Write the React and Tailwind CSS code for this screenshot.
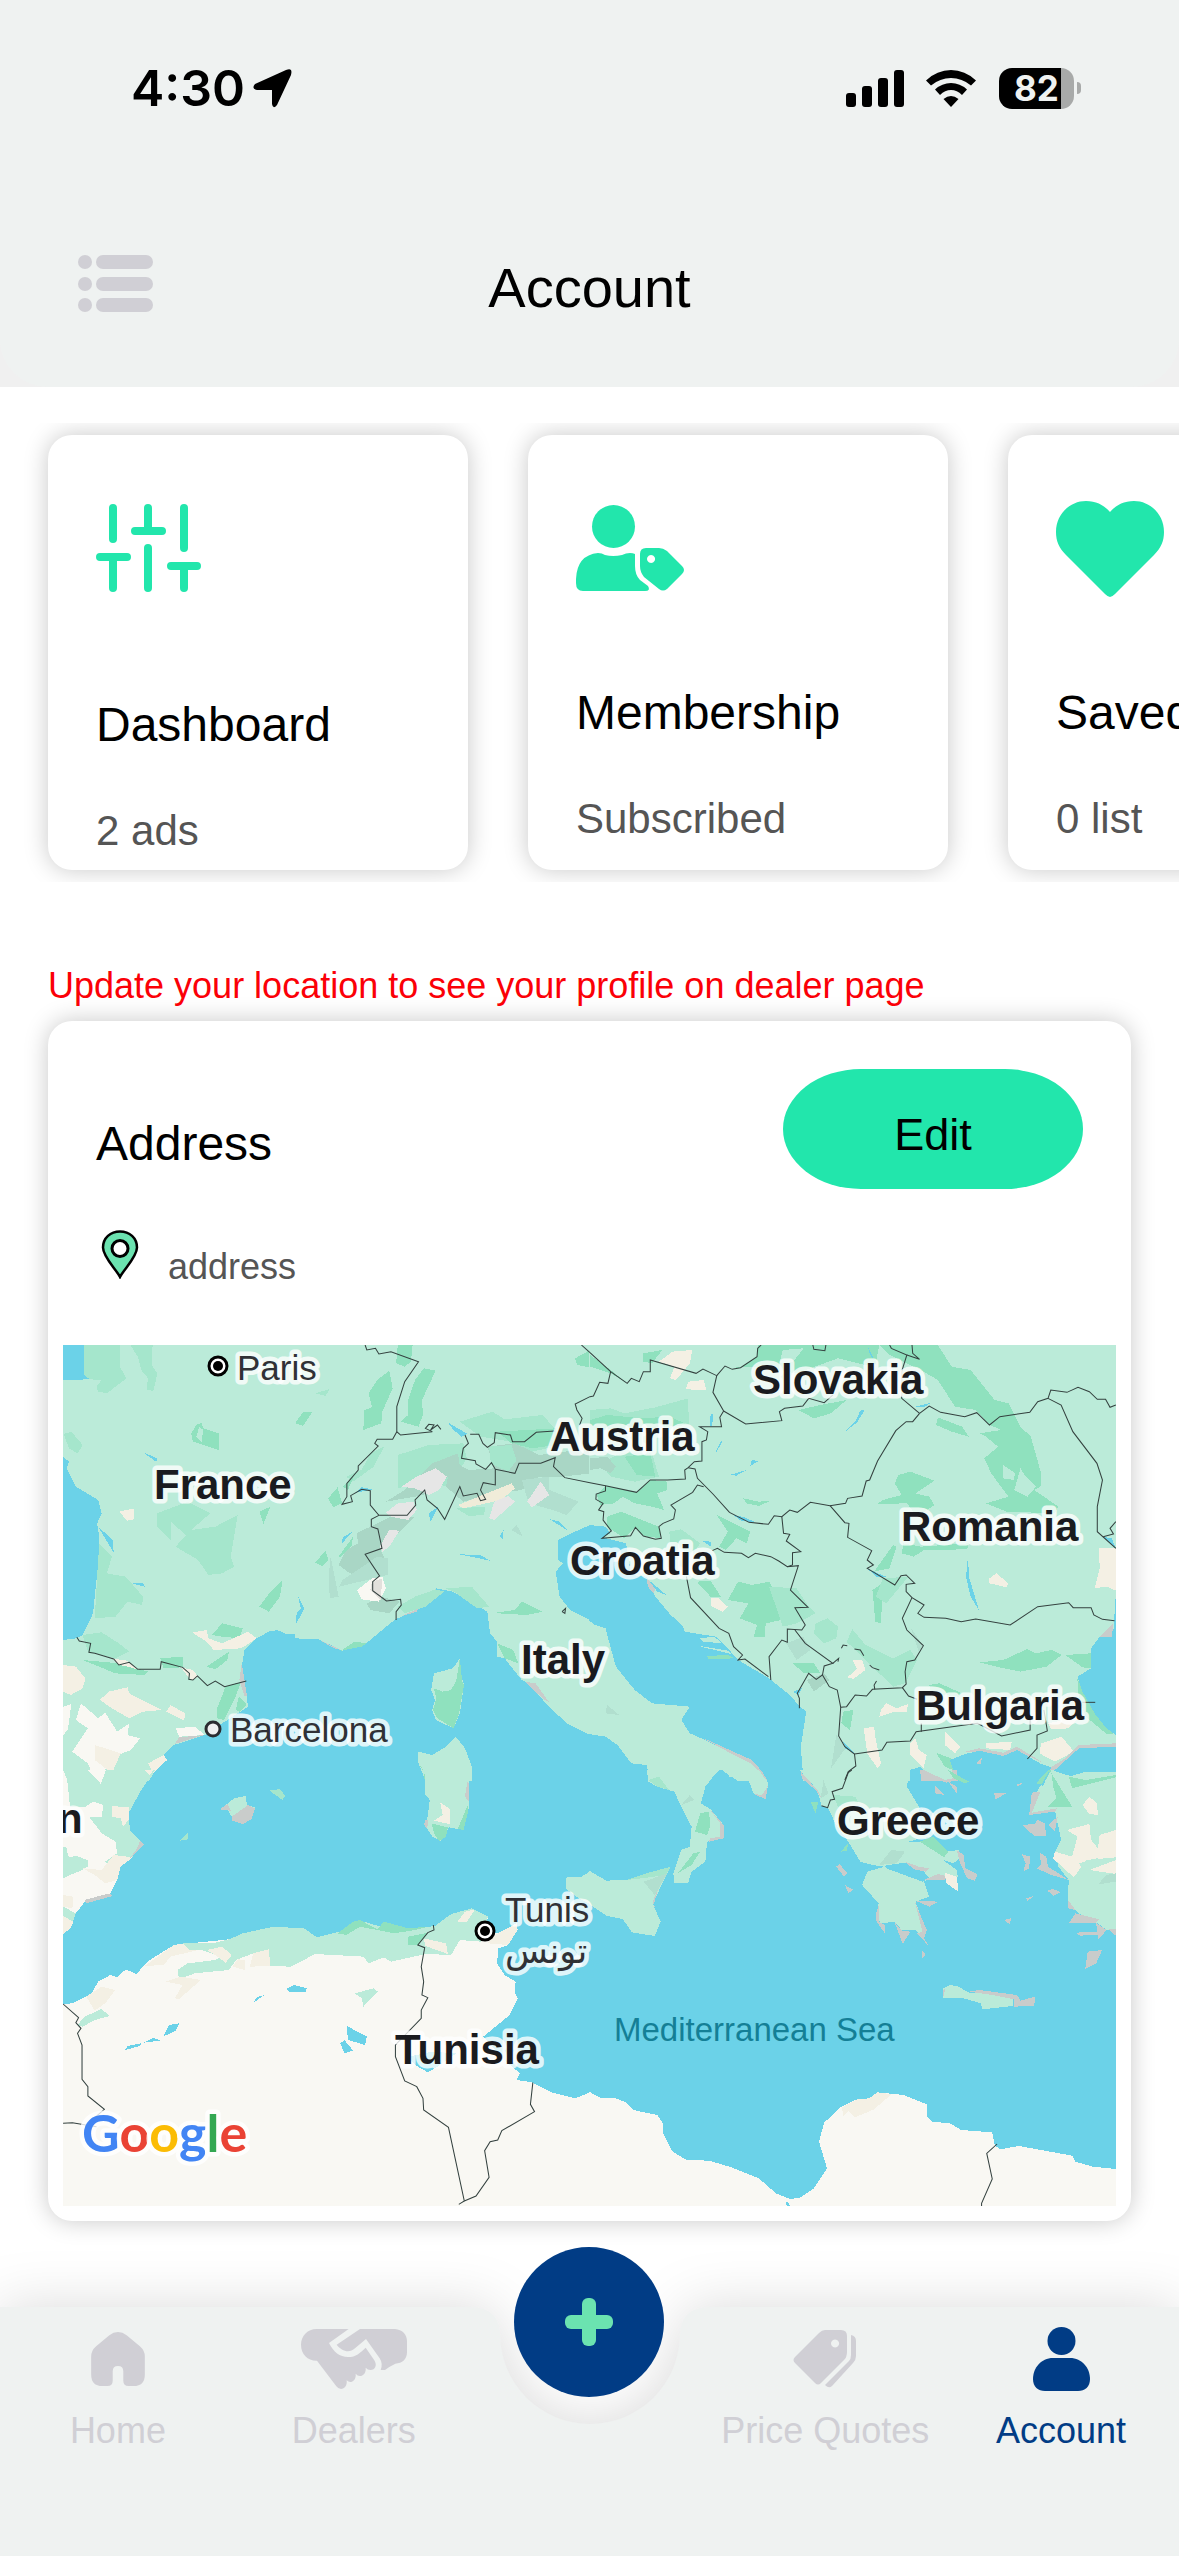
import React from "react";

const SANS = '"Liberation Sans", "Noto Sans", sans-serif';

const DARK = "#8fe1be";
const MID = "#a5e6cc";
const LAND = "#bbebd9";
const BEIGE = "#f4f0e4";
const CREAM = "#f9f8f3";
const GREY = "#c9cccb";
const SEA = "#6bd2e8";
const RIDGE = "#a9d6c5";
const SNOW = "#e6e6e6";

/* Each sheet of the map has its own origin; shapes are [colour, points...]. */
const sheets = [
  {
    id: "north-west",
    x: 50,
    y: 1330,
    shapes: [
      [LAND, "98,45 1568,45 1568,585 1535,600 1475,630 1475,690 1490,700 1468,725 1480,800 1510,840 1572,872 1572,1217 1500,1180 1440,1120 1390,1060 1370,1050 1320,985 1298,980 1298,935 1278,910 1270,845 1170,785 1120,775 1070,835 1000,870 912,945 850,962 780,928 712,925 712,912 685,912 660,900 635,905 600,925 565,960 557,1010 565,1060 575,1130 500,1180 450,1215 360,1245 330,1275 340,1290 300,1330 288,1352 38,1352 38,930 75,925 95,915 125,850 130,800 140,700 143,620 137,580 150,550 140,510 75,470 48,415 55,395 38,380 38,150 115,148 100,135"],
      [LAND, "1115,1030 1170,1015 1190,985 1195,1040 1202,1065 1190,1150 1172,1195 1120,1170 1110,1140 1118,1110 1107,1080"],
      [DARK, "1190,985 1197,1055 1202,1065 1188,1150 1172,1195 1125,1165 1112,1140 1122,1105 1115,1075 1140,1085 1165,1080 1180,1050"],
      [LAND, "1070,1265 1110,1275 1150,1250 1178,1220 1205,1255 1225,1310 1225,1352 1090,1352 1070,1300"],
      [DARK, "1070,1300 1080,1312 1095,1352 1088,1352 1085,1325"],
      [MID, "98,45 203,45 203,110 222,145 165,190 140,185 135,170 150,150 115,148 100,135"],
      [MID, "233,45 298,45 295,105 312,130 300,183 280,178 285,145 265,120 255,80"],
      [MID, "40,312 62,305 95,345 80,370 55,355"],
      [DARK, "410,310 425,285 440,278 445,295 490,310 490,360 430,340 415,335"],
      [LAND, "433,290 425,320 440,335 445,300"],
      [DARK, "735,245 762,245 735,288 712,280"],
      [MID, "770,190 812,177 800,198"],
      [DARK, "1010,45 1053,45 1048,95 1030,110 1005,100"],
      [DARK, "985,120 995,175 965,245 962,280 910,300 912,240 935,232 925,190 950,150 975,130"],
      [DARK, "1085,115 1120,122 1080,210 1083,255 1070,290 1018,275 1040,255 1038,215 1060,150"],
      [DARK, "1568,60 1525,85 1530,105 1568,112"],
      [MID, "1190,275 1285,245 1320,268 1430,255 1470,300 1465,350 1400,365 1340,335 1250,320"],
      [DARK, "1300,305 1470,295 1470,345 1400,355 1340,340"],
      [MID, "1010,375 1100,345 1200,340 1210,385 1160,470 1080,455 1010,475"],
      [MID, "860,440 905,420 930,370 970,350 940,410 880,455"],
      [DARK, "850,470 883,438 865,480"],
      [DARK, "808,505 835,472 848,520 822,532"],
      [RIDGE, "1165,390 1215,420 1290,415 1270,350 1350,340 1420,375 1568,355 1568,430 1490,440 1420,440 1370,480 1290,490 1200,515 1150,470"],
      [MID, "1275,350 1340,345 1355,390 1330,425 1280,400"],
      [RIDGE, "1110,400 1185,370 1190,410 1100,490 1060,500 975,515 1030,480"],
      [RIDGE, "890,610 990,560 1060,560 1010,610 960,660 980,700 950,740 870,730 838,705 860,660 895,640"],
      [RIDGE, "920,820 960,800 1015,815 985,850 930,840"],
      [MID, "1060,800 1120,778 1145,785 1090,830 1030,850 1010,830"],
      ["#b1dfcf", "815,680 838,800 812,805 810,730"],
      ["#b1dfcf", "950,680 980,685 980,735 840,770 850,750"],
      ["#b1dfcf", "1370,450 1450,440 1450,480 1535,515 1500,555 1460,540 1390,520"],
      ["#b1dfcf", "1340,600 1355,585 1373,620"],
      [DARK, "838,680 880,620 875,650 843,683"],
      [SNOW, "1020,470 1065,440 1120,415 1152,440 1130,480 1100,495 1060,475"],
      [SNOW, "975,548 1010,520 1055,515 1065,540 1040,570 990,560"],
      [SNOW, "957,650 985,600 1015,602 985,650 965,665"],
      [CREAM, "892,780 935,745 965,740 975,775 955,815 905,808"],
      ["#e2e0dc", "935,755 965,745 960,810 930,780"],
      ["#f0ecd9", "1185,525 1340,460 1350,475 1310,510 1200,535"],
      [SNOW, "1290,515 1330,498 1350,515 1290,570 1275,565"],
      [SNOW, "1385,515 1425,455 1450,495 1400,532"],
      [MID, "1180,535 1265,530 1260,555 1215,558"],
      [MID, "310,550 400,515 465,550 410,600 480,590 545,555 525,680 535,710 500,730 460,735 430,690 365,650 395,615 350,575 350,630 310,590"],
      [DARK, "608,545 640,530 620,582"],
      [MID, "143,640 180,680 165,730 220,740 270,800 268,825 225,815 190,860 130,865 138,720"],
      [DARK, "675,750 668,800 635,845 608,830 640,785"],
      [DARK, "770,698 800,662 808,690 790,708"],
      [MID, "95,915 150,907 200,940 230,965 190,985 110,965"],
      [DARK, "470,915 500,880 560,895 550,925 500,920"],
      [BEIGE, "413,908 455,900 460,925 500,940 575,905 600,925 555,955 475,960 455,935"],
      [DARK, "455,1010 520,965 515,990 480,1018"],
      [DARK, "95,990 200,1000 285,1025 275,1035 190,1030"],
      [DARK, "320,985 385,980 385,1012 330,1015"],
      [DARK, "485,1135 510,1070 555,1055 535,1110 505,1170 485,1165"],
      [DARK, "540,1140 548,1100 572,1125 550,1145"],
      [GREY, "557,1000 550,1050 565,1100 572,1098"],
      [BEIGE, "180,987 220,990 260,1020 225,1010 200,1005"],
      [BEIGE, "380,1012 415,1020 430,1040 410,1052"],
      [BEIGE, "38,1005 75,1010 103,1045 95,1075 60,1095 38,1085"],
      [BEIGE, "145,1110 170,1085 225,1072 230,1090 325,1140 270,1145 230,1165 180,1135"],
      [BEIGE, "338,1145 350,1125 392,1150 390,1172"],
      [BEIGE, "200,545 245,535 245,568 225,572"],
      [CREAM, "38,1130 62,1122 52,1200 38,1215"],
      [CREAM, "90,1120 140,1165 160,1148 195,1205 230,1180 225,1215 262,1225 235,1260 185,1280 160,1320 160,1352 130,1352 110,1300 65,1265 110,1195 75,1170"],
      [BEIGE, "130,1245 205,1270 180,1330 130,1290"],
      [BEIGE, "285,1300 330,1275 340,1290 300,1330"],
      [CREAM, "365,1195 420,1190 450,1215 375,1220"],
      [GREY, "375,1222 448,1215 362,1242"],
      [DARK, "845,962 885,935 918,940 905,950"],
      [GREY, "783,930 845,960 825,955"],
      [GREY, "1000,868 1070,835 1065,845 1010,862"],
      [MID, "1150,775 1225,770 1275,830 1240,835 1180,790"],
      [DARK, "1280,850 1350,840 1370,815 1430,845 1385,855 1300,850"],
      [DARK, "1298,940 1345,960 1360,1000 1320,985"],
      [GREY, "1380,1055 1410,1060 1448,1115 1435,1110"],
      [SEA, "270,367 312,385 308,395"],
      [SEA, "140,590 182,630 185,668 160,625"],
      [SEA, "1155,277 1212,312 1195,320 1172,300"],
      [SEA, "888,488 905,472 938,478"],
      [SEA, "848,640 850,622 878,605"],
      [SEA, "1100,550 1128,530 1105,575"],
      [SEA, "720,797 738,835 715,882 716,850 728,835"],
      [SEA, "1188,673 1250,675 1278,692"],
      [SEA, "1450,567 1480,575 1503,602"],
      [SEA, "1305,620 1317,600 1315,627"],
      [SEA, "238,760 270,760 275,770"],
    ],
    borders: [
      "915,45 920,60 945,55 955,72 990,65 1070,95 1030,155 1007,230 1007,305 1018,315 1110,305",
      "1110,305 1090,295 1100,283 1115,285 1105,300 1125,285 1135,298",
      "1007,305 995,328 950,328 943,340 953,348 895,408 895,420 862,460 862,500 848,523 878,515 873,497 905,478 930,482 930,525 955,556 1037,556 1062,525 1060,510 1088,480 1095,510 1125,535 1146,568 1190,470 1200,498 1240,490 1250,512 1265,508 1250,480 1258,458 1293,465 1293,418 1282,398 1265,418 1237,402 1235,392 1195,385 1200,355 1215,340 1205,315",
      "955,556 933,568 933,590 952,597 964,655 915,673 957,738 937,755 937,782 977,813 1018,808 1020,825 1005,845 1005,870",
      "1220,313 1245,313 1257,340 1270,352 1290,338 1293,308 1337,315 1343,335 1378,335 1412,307 1465,303",
      "1293,418 1350,430 1362,400 1425,400 1467,383 1462,410 1495,443 1568,458",
      "1543,45 1568,68",
      "1568,200 1525,222 1530,240 1545,265 1538,285",
      "78,922 85,933 118,940 113,967 130,970 185,987 200,1005 230,997 255,1018 320,1018 323,995 385,1012 405,1030 403,1048 415,1050 428,1038 457,1067 480,1053 507,1070 570,1053",
      "1487,845 1497,835 1495,850 1487,845",
    ],
  },
  {
    id: "north-east",
    x: 590,
    y: 1330,
    shapes: [
      [LAND, "-2,45 1527,45 1527,1352 -2,1352"],
      [DARK, "487,45 840,45 830,100 800,105 720,85 600,130 470,110 410,115 440,110 485,80"],
      [LAND, "560,60 620,55 590,95 550,100"],
      [DARK, "840,45 1010,45 1050,110 1105,120 1175,210 1215,220 1250,290 1280,320 1310,430 1308,470 1290,480 1360,530 1350,550 1210,545 1150,520 1215,500 1165,430 1145,385 1185,350 1150,320 1130,310 1195,300 1160,285 1120,240 1060,230 1010,150 960,120 870,75"],
      [LAND, "1200,405 1235,430 1230,450 1200,445"],
      [LAND, "1250,415 1265,440 1295,470 1270,500 1232,480"],
      [DARK, "0,75 60,120 108,160 60,130 0,110"],
      [DARK, "155,70 210,60 180,100 155,95"],
      [BEIGE, "200,95 240,65 297,60 290,100 250,150 232,145 245,110"],
      [BEIGE, "278,178 285,155 330,150 338,180"],
      [MID, "0,240 60,235 100,250 190,232 285,205 287,285 180,290 0,275"],
      [DARK, "0,270 50,255 150,265 230,260 287,285 160,295 0,300"],
      [MID, "30,400 90,370 180,370 200,440 130,455 60,440"],
      [DARK, "100,380 175,370 190,440 135,435"],
      [RIDGE, "0,385 50,380 75,410 60,430 30,415 0,420"],
      [DARK, "45,467 135,487 175,450 225,455 225,480 195,490 215,540 180,530 130,520 95,500 70,520 30,525 20,495"],
      [DARK, "50,560 90,545 200,590 205,625 155,618 132,592 100,625 50,590"],
      [MID, "230,605 265,598 320,640 300,670 235,650"],
      [DARK, "368,555 465,605 455,640 425,625 395,660 375,650 400,605"],
      [DARK, "445,505 490,515 525,512 490,528 455,520"],
      [DARK, "605,240 670,225 745,210 700,250 650,265"],
      [DARK, "1010,262 1080,290 1100,320 1050,305 1005,285"],
      [DARK, "895,435 930,425 1000,452 945,490 985,500 1000,525 950,560 920,520 835,522 850,510 905,495 885,460"],
      [DARK, "880,645 890,650 870,715 825,725"],
      [DARK, "910,640 960,650 1100,640 1095,658 970,660 940,680 905,670"],
      [DARK, "820,780 850,760 845,880 828,875 825,830"],
      [MID, "850,745 925,740 860,820 830,800"],
      [DARK, "310,755 350,752 380,800 350,800"],
      [DARK, "400,810 430,755 470,765 520,755 545,800 585,825 580,865 510,880 508,922 475,920 485,885 435,865 460,820"],
      [MID, "520,770 600,775 635,830 655,850 600,880 560,890"],
      [BEIGE, "350,805 372,803 400,830 385,845 352,828"],
      [MID, "655,880 690,865 720,890 715,925 680,940 650,910"],
      [MID, "745,935 762,898 800,945 880,985 930,960 950,990 915,1060 880,1070 830,1020 770,960"],
      [DARK, "590,1000 650,1000 670,1030 620,1030"],
      [RIDGE, "630,1050 680,1030 695,1050 650,1085"],
      ["#b1dfcf", "570,940 620,920 640,960 600,990"],
      ["#b1dfcf", "930,890 965,945 955,965"],
      ["#b1dfcf", "715,1215 745,1250 700,1315"],
      ["#b1dfcf", "50,1125 85,1155 45,1150"],
      [BEIGE, "762,990 790,990 800,1020 765,1047 748,1042 775,1015"],
      [BEIGE, "845,1140 860,1120 890,1135 923,1122 920,1145 885,1145 840,1160"],
      [BEIGE, "795,1195 825,1190 830,1230 845,1300 835,1315 805,1270"],
      [BEIGE, "930,1240 945,1225 955,1260 978,1275 968,1315 930,1275"],
      [BEIGE, "1030,1205 1075,1250 1060,1270 1030,1245"],
      [BEIGE, "1150,1240 1225,1235 1220,1260 1150,1255"],
      [BEIGE, "1310,1240 1370,1220 1405,1265 1350,1295 1305,1270"],
      [BEIGE, "1330,1180 1420,1160 1390,1195 1340,1198"],
      [BEIGE, "1160,745 1180,730 1215,760 1210,772 1160,760"],
      [BEIGE, "1478,655 1527,655 1527,782 1500,770 1465,775 1480,715"],
      [DARK, "1130,997 1200,990 1270,957 1295,970 1340,960 1370,975 1325,1010 1250,1025 1180,1010"],
      [DARK, "1380,975 1455,970 1455,1015 1430,1012"],
      [DARK, "985,1065 1015,1060 1080,1090 1070,1100 990,1090"],
      [DARK, "1415,1045 1435,1085 1465,1150 1527,1210 1500,1212 1440,1160 1420,1110"],
      [DARK, "735,1145 765,1140 755,1200 730,1180"],
      [DARK, "1005,1268 1060,1290 1055,1320 1030,1310"],
      [SEA, "-2,585 45,590 60,610 35,622 105,640 120,735 165,740 190,800 230,850 270,890 275,905 365,920 400,955 430,990 520,1045 580,1095 610,1130 628,1145 612,1250 620,1352 515,1352 470,1300 400,1265 345,1235 290,1210 265,1170 290,1130 180,1120 130,1080 75,1010 45,895 15,885 -2,872"],
      [LAND, "320,925 360,920 385,940 330,935"],
      [LAND, "318,948 400,962 410,972 330,952"],
      [DARK, "340,978 400,975 420,985 345,988"],
      [GREY, "165,745 192,770 185,790 168,770"],
      [GREY, "320,1220 470,1290 500,1325 515,1352 470,1302 400,1265"],
      [SEA, "-2,1212 45,1220 80,1245 120,1300 165,1305 172,1352 -2,1352"],
      [SEA, "338,1352 380,1318 428,1352"],
      [SEA, "1527,790 1520,900 1480,920 1455,955 1455,1015 1415,1040 1430,1085 1465,1150 1500,1195 1527,1215"],
      [GREY, "1520,880 1515,920 1480,920"],
      [GREY, "1527,1240 1420,1245 1380,1285 1310,1330 1350,1320 1420,1255 1527,1250"],
      [SEA, "1527,1250 1420,1255 1350,1320 1300,1352 1350,1352 1440,1325 1527,1325"],
      [GREY, "1090,1265 1130,1255 1200,1268 1240,1250 1315,1298 1240,1262 1200,1280"],
      [SEA, "930,1352 928,1320 960,1310 975,1330 1060,1340 1045,1290 1090,1272 1130,1262 1200,1278 1240,1260 1310,1302 1340,1312 1320,1352"],
      [GREY, "1120,1300 1138,1283 1135,1303"],
      [GREY, "960,1325 985,1325 1070,1352 960,1352"],
      [SEA, "348,290 350,255 358,250 355,285"],
      [SEA, "738,307 770,275 785,242 798,240 775,278"],
      [SEA, "360,378 380,333 385,335"],
      [SEA, "405,435 455,420 425,437"],
      [SEA, "465,408 470,390 490,393"],
      [SEA, "415,555 450,562 480,577 440,573"],
      [SEA, "808,718 860,740 830,740"],
      [SEA, "1098,675 1100,740 1130,842 1105,800 1092,740"],
      [SEA, "945,230 990,218 970,232"],
      [SEA, "805,45 833,108 812,70"],
      [SEA, "590,1085 615,1075 605,1095"],
      [SEA, "325,632 350,635 352,650"],
      [SEA, "735,1235 770,1270 740,1255"],
      [SEA, "1490,620 1515,625 1527,655"],
      [SEA, "170,750 222,795 195,785"],
    ],
    borders: [
      "0,68 60,125 108,160 120,145 143,155 155,125 175,125 175,90 308,130 328,117 368,137 357,187 388,243 377,262 382,290 318,290 342,305 338,330 325,335 325,393 303,395 285,413 275,420 277,447 225,450 175,450 135,487 45,467 0,458",
      "60,125 52,160 28,157 10,198 0,200",
      "368,137 392,108 413,118 437,113 485,80 487,55 497,45",
      "388,243 452,282 557,272 550,245 565,235 618,228 635,205 680,218 705,195",
      "647,45 650,58 682,62 685,45",
      "870,45 875,55 920,75 905,125 905,205 957,250",
      "935,45 937,70 957,88 920,75",
      "957,250 985,228 1018,247 1088,260 1123,248 1160,285 1190,260 1277,247 1300,215 1330,205 1338,180 1385,187 1417,172 1450,185 1473,208 1497,208 1510,232 1527,225",
      "1330,205 1368,225 1402,305 1472,400 1488,450 1473,530 1473,605 1527,655",
      "1527,575 1510,595 1520,612 1490,620",
      "957,250 937,275 918,275 888,302 835,393 812,450 802,453 790,498 748,505 742,520 697,527 640,517 602,547 580,540 557,560 535,557 518,583 462,577 405,547 357,492 312,445 305,417 285,413",
      "330,470 312,465 298,487 235,525 248,540 243,567 212,580 200,590 207,625 190,628 155,618 132,592 118,617 35,625 62,603 38,570 40,545 25,540 38,520 17,508 18,492 45,483 45,467",
      "697,527 740,578 752,580 748,622 818,662 805,690 823,705 805,715 885,765 903,737 918,735 943,760 918,763 918,785 935,803 970,825 952,850 970,862 1033,865 1078,875 1120,867 1220,885 1300,830 1390,818 1403,833 1455,833 1463,855 1488,868 1523,872",
      "935,803 907,865 920,900 968,947 943,990 920,995 915,1025 918,1062 907,1073 820,1078 803,1098 770,1095 745,1130 728,1132",
      "557,560 562,610 580,613 570,633 612,665 588,668 588,705 573,710 548,693 525,680 480,670 460,683 440,670 390,667 370,655 355,662",
      "573,710 605,707 582,780 633,832 595,833 625,885 615,900 573,897 573,937 557,930 520,980 525,1050",
      "280,740 292,803 375,895 403,910 417,950 443,975 430,990 450,987 518,1040",
      "595,900 625,940 705,1000 680,1008 675,1035 657,1048 635,1030 602,1090 608,1105 608,1135",
      "705,1000 722,985 720,995",
      "730,955 735,945 747,947",
      "768,957 785,960 795,977",
      "812,1005 820,1013 840,1020",
      "832,1053 825,1065 827,1078",
      "675,1035 695,1070 718,1080 728,1132 722,1218 740,1250 768,1272 772,1308 750,1325 740,1350",
      "768,1272 848,1260 862,1237 930,1233 947,1205 1125,1180 1195,1218 1278,1200 1278,1170",
      "907,1073 925,1098 950,1108",
      "962,1205 962,1180",
      "1318,1140 1328,1203 1298,1215 1298,1255 1270,1287",
      "1430,1117 1467,1117",
    ],
  },
  {
    id: "south-west",
    x: 50,
    y: 1770,
    shapes: [
      [LAND, "38,30 38,0 305,0 265,60 228,130 232,180 272,222 235,265 205,290 195,330 172,375 105,390 75,430 60,475 38,492"],
      [CREAM, "38,0 50,30 58,110 100,112 125,95 155,105 150,140 115,142 150,190 190,215 195,250 160,275 190,300 205,290 195,330 172,375 105,390 75,430 38,410 38,325 110,290 110,270 75,258 55,262 45,230 38,230"],
      [CREAM, "110,0 162,0 148,42"],
      [LAND, "38,230 48,235 52,268 75,257 112,272 95,300 38,323"],
      [BEIGE, "180,108 228,112 228,150 212,170 205,145 180,140"],
      [BEIGE, "95,295 150,300 185,255 240,262 205,290 195,330 160,340 130,315"],
      [BEIGE, "38,375 68,380 65,415 38,410"],
      [BEIGE, "38,438 68,455 60,475 38,492"],
      [BEIGE, "275,0 300,0 290,15"],
      [GREY, "172,370 182,378 105,400 100,390"],
      [GREY, "262,212 273,222 232,265 250,240"],
      [LAND, "1087,0 1225,0 1215,40 1217,110 1200,180 1158,172 1135,213 1110,200 1092,170 1103,90 1090,75"],
      [GREY, "1212,35 1218,45 1216,95 1205,80"],
      [GREY, "1088,150 1098,150 1095,178 1087,165"],
      [BEIGE, "1133,97 1162,118 1163,163 1115,152 1140,135"],
      [DARK, "1108,160 1155,172 1150,200 1130,213 1115,190"],
      [DARK, "1215,100 1215,120 1200,182 1185,175"],
      [LAND, "510,105 535,85 568,78 572,105 595,112 550,140 525,138"],
      [GREY, "492,118 515,102 525,122"],
      [GREY, "528,140 575,105 595,115 585,148 560,162 530,152"],
      [MID, "637,62 668,57 683,78 675,90"],
      [MID, "378,212 402,185 400,208"],
      [LAND, "1500,322 1540,322 1572,302 1572,405 1535,385 1497,355"],
      [CREAM, "38,702 65,700 120,672 140,635 175,615 195,622 220,598 250,612 290,570 360,525 520,508 560,490 640,472 735,473 775,502 860,480 895,450 960,470 1060,475 1118,468 1165,432 1225,415 1272,440 1262,490 1300,490 1355,460 1358,480 1330,525 1302,535 1298,580 1320,615 1352,635 1350,670 1358,685 1335,735 1258,800 1330,880 1365,910 1355,930 1400,937 1460,968 1525,985 1572,966 1572,1308 38,1308"],
      [BEIGE, "275,588 360,525 390,520 430,540 350,560 330,585"],
      [LAND, "385,518 480,518 520,508 560,490 640,472 735,473 775,502 860,480 895,450 960,470 1060,475 1118,468 1165,432 1225,415 1272,440 1250,515 1190,510 1165,555 1090,552 990,575 970,562 925,580 910,560 770,552 700,590 640,588 635,545 590,550 540,570 520,600 420,610 375,628 370,600 400,580 480,570 500,560 440,540 405,540"],
      [DARK, "835,490 880,455 900,450 950,478 970,455 1040,475 1100,470 1060,480 1000,490 900,470 860,495"],
      [DARK, "1040,500 1098,488 1068,525 1040,525"],
      [BEIGE, "455,540 500,530 528,555 510,578 480,555"],
      [BEIGE, "530,590 545,568 567,570 565,600"],
      [BEIGE, "580,590 590,550 635,538 640,588"],
      [BEIGE, "1085,505 1150,520 1155,552 1090,528"],
      [BEIGE, "1183,455 1205,425 1235,418 1210,455"],
      [BEIGE, "1300,490 1355,460 1358,480 1330,525 1270,520"],
      [BEIGE, "335,635 380,620 438,630 375,687 362,685 385,645"],
      [BEIGE, "105,680 150,650 190,660 160,700 130,722"],
      [LAND, "80,765 100,740 150,717 173,738 130,750 95,770"],
      [LAND, "885,670 940,655 952,665 910,710 905,685"],
      [SEA, "685,657 710,645 745,655 743,665 695,665"],
      [SEA, "592,697 600,682 623,675"],
      [SEA, "328,800 345,765 375,760 365,782"],
      [SEA, "218,840 225,828 265,820 262,828"],
      [SEA, "272,818 300,803 320,812"],
      [SEA, "862,768 920,800 915,825 865,810"],
      [SEA, "843,820 855,810 880,842 855,850"],
      [SEA, "1040,860 1110,845 1180,850 1125,890 1097,907 1060,885"],
    ],
    borders: [
      "1113,465 1115,480 1097,488 1068,525 1088,533 1078,590 1085,635 1080,675 1097,683 1078,720 1078,745 1003,825 1003,860 1030,933 1065,950 1083,985 1085,1020 1157,1072 1203,1293 1187,1303",
      "1203,1293 1237,1278 1275,1222 1262,1142 1278,1115 1300,1110 1312,1082 1407,1025 1395,1003 1402,938",
      "38,702 83,743 75,758 90,775 80,790 93,825 93,928 110,950 110,978 158,1018 110,1060",
      "38,1060 65,1058 135,1070",
    ],
  },
  {
    id: "south-east",
    x: 590,
    y: 1770,
    shapes: [
      [CREAM, "-2,967 30,983 75,985 105,997 125,1020 195,1035 212,1060 212,1090 240,1145 280,1170 345,1172 405,1190 490,1225 540,1270 580,1287 610,1283 650,1255 688,1195 665,1115 680,1058 730,1010 775,988 810,985 835,967 910,975 978,1003 978,1040 995,1055 1045,1060 1078,1080 1168,1087 1175,1125 1190,1138 1245,1128 1400,1157 1410,1175 1460,1190 1527,1197 1527,1308 -2,1308"],
      [BEIGE, "732,1012 775,988 810,985 835,967 875,973 825,1018 770,1042 750,1022 735,1040"],
      [LAND, "165,0 372,0 335,50 322,100 350,118 388,165 388,205 340,215 335,275 295,305 285,338 245,338 242,310 265,240 290,230 295,170 260,100 245,65 195,50 170,35"],
      [MID, "170,30 200,20 230,60 195,50"],
      ["#b1dfcf", "265,105 290,75 303,90"],
      [DARK, "305,185 320,130 345,125 350,165 340,195"],
      [DARK, "255,310 300,250 320,245 295,285"],
      [GREY, "348,118 388,165 388,205 345,215 350,205 378,200 378,160"],
      [LAND, "400,0 490,0 518,40 510,88 475,70 460,30 405,20"],
      [GREY, "516,48 510,88 475,72 500,75"],
      [LAND, "-2,303 48,332 125,328 235,290 225,310 182,400 205,455 188,498 122,487 95,447 50,438 -2,403"],
      [MID, "105,330 170,308 235,290 220,315 150,325"],
      ["#b1dfcf", "155,335 225,310 188,375"],
      [GREY, "200,350 186,400 190,420 182,395"],
      [LAND, "610,0 930,0 920,50 958,115 1130,180 1000,205 1035,245 1070,240 1080,260 1055,280 1025,270 1065,300 1068,320 1010,315 970,335 985,380 945,395 975,480 965,505 945,480 905,480 885,455 845,460 830,440 838,400 790,345 805,305 855,290 820,285 785,275 750,215 715,165 690,113 672,107 660,60"],
      [SEA, "955,115 1140,190 1000,205 960,215 925,215 960,205 990,200 960,170"],
      [SEA, "855,287 915,278 970,305 985,325 965,335 900,310 860,295"],
      [GREY, "612,5 660,60 672,85 655,60 615,25"],
      [GREY, "915,275 955,290 985,295 975,305 940,298"],
      [GREY, "970,330 1010,312 1040,320 1030,330 985,330"],
      [GREY, "1065,240 1085,255 1090,295 1125,312 1118,332 1095,325 1075,280"],
      [BEIGE, "1030,308 1065,320 1070,365 1035,340"],
      [GREY, "945,392 1012,395 985,410"],
      [GREY, "945,400 978,480 970,505 985,530 950,490 965,485"],
      [GREY, "830,430 838,408 838,455 858,465 858,492 832,455"],
      [GREY, "885,458 905,482 930,485 908,522"],
      [DARK, "958,215 995,200 1040,245 1028,262"],
      [DARK, "728,245 750,220 745,242"],
      [DARK, "640,95 663,95 655,130"],
      [MID, "705,75 770,80 780,100 720,110"],
      ["#b1dfcf", "840,285 875,240 915,245 890,280"],
      ["#b1dfcf", "670,85 678,30 692,70"],
      [GREY, "715,290 725,283 748,310 738,320"],
      [GREY, "740,345 765,360 750,368"],
      [GREY, "963,540 975,552 963,567"],
      [GREY, "958,0 1065,0 1065,30 1035,38 960,15"],
      [LAND, "970,0 1050,0 1055,25 1030,30"],
      [DARK, "1040,0 1100,35 1090,40 1055,25"],
      [GREY, "1003,48 1030,75 1003,70"],
      [GREY, "1040,35 1065,50 1065,70"],
      [GREY, "1173,68 1208,70 1178,88"],
      [GREY, "1235,45 1258,38 1245,48"],
      [GREY, "1255,165 1290,162 1300,150 1320,160 1325,198 1290,198"],
      [GREY, "1253,252 1278,260 1275,295 1258,305 1265,280"],
      [GREY, "1305,248 1325,260 1330,290 1390,330 1340,315 1297,295 1310,285"],
      [GREY, "1265,385 1290,378 1270,392"],
      [GREY, "1328,362 1345,357 1367,367 1345,377"],
      [GREY, "1202,450 1223,445 1218,462"],
      [GREY, "1445,545 1487,540 1470,580 1438,597"],
      [GREY, "1408,488 1480,485 1480,493 1425,497"],
      [LAND, "1527,15 1400,20 1340,0 1300,60 1283,130 1350,120 1360,170 1368,210 1350,245 1360,290 1390,330 1388,395 1420,430 1475,460 1500,480 1527,478"],
      [GREY, "1283,68 1308,65 1283,128 1355,115 1350,125 1275,135"],
      [GREY, "1330,165 1358,140 1350,185"],
      [GREY, "1388,390 1410,420 1388,415"],
      [GREY, "1410,430 1480,448 1465,460 1390,460"],
      [GREY, "1470,460 1500,480 1475,510"],
      [GREY, "1505,478 1527,478 1527,497"],
      [DARK, "1340,10 1400,110 1330,110 1355,85 1345,50"],
      [DARK, "1295,40 1330,0 1340,0 1315,45"],
      [DARK, "1390,20 1440,30 1527,15 1527,22 1400,55"],
      [BEIGE, "1430,105 1450,80 1472,100 1475,135 1450,132"],
      [BEIGE, "1385,180 1450,162 1455,210 1475,235 1480,195 1527,180 1527,262 1440,270 1420,300 1405,322 1370,290 1345,265 1350,245 1400,260 1415,200"],
      [LAND, "1420,280 1470,265 1527,270 1500,300 1430,300"],
      [BEIGE, "1450,300 1527,270 1527,312"],
      ["#b1dfcf", "1475,343 1500,315 1527,310 1527,335"],
      [SEA, "1310,45 1332,5 1335,5 1315,48"],
      [LAND, "1025,655 1045,645 1070,650 1100,668 1160,668 1230,685 1228,708 1140,718 1135,700 1085,685 1025,683"],
      [GREY, "1100,665 1130,660 1240,675 1250,692 1292,680 1290,708 1230,710 1230,688 1170,675"],
      [GREY, "1025,660 1032,655 1025,683"],
      [SEA, "568,1297 575,1297 582,1308 572,1308"],
    ],
    borders: [
      "760,0 750,8 733,55 703,65 710,88 698,90 690,113 672,107",
      "1182,1122 1152,1150 1168,1227 1137,1300 1137,1308",
    ],
  },
];

const countries = [
  ["France", 154, 1499],
  ["Austria", 550, 1451],
  ["Slovakia", 753, 1394],
  ["Romania", 901, 1541],
  ["Croatia", 570, 1575],
  ["Italy", 521, 1674],
  ["Bulgaria", 916, 1720],
  ["Greece", 837, 1835],
  ["n", 57, 1833],
  ["Tunisia", 395, 2064],
];

const cities = [
  ["Paris", 237, 1380],
  ["Barcelona", 230, 1742],
  ["Tunis", 505, 1922],
];

const halo = {
  stroke: "#ffffff",
  strokeOpacity: 0.8,
  strokeWidth: 9,
  strokeLinejoin: "round",
  paintOrder: "stroke",
};

function CapitalDot({ x, y }) {
  return (
    <g>
      <circle cx={x} cy={y} r="9" fill="#fff" stroke="#000" strokeWidth="3" />
      <circle cx={x} cy={y} r="5" fill="#000" />
    </g>
  );
}

function RegionMap() {
  return (
    <svg viewBox="63 1345 1053 861" className="block w-full" role="img" aria-label="Map of the Mediterranean">
      <rect x="63" y="1345" width="1053" height="861" fill={SEA} />
      {sheets.map((s) => (
        <g key={s.id} transform={`translate(${s.x} ${s.y}) scale(0.34439 0.33333)`}>
          {s.shapes.map(([fill, points], i) => (
            <polygon key={i} points={points} fill={fill} shapeRendering="crispEdges" />
          ))}
        </g>
      ))}
      {sheets.map((s) => (
        <g
          key={s.id}
          transform={`translate(${s.x} ${s.y}) scale(0.34439 0.33333)`}
          fill="none"
          stroke="#34413f"
          strokeWidth="3"
        >
          {s.borders.map((points, i) => (
            <polyline key={i} points={points} />
          ))}
        </g>
      ))}
      <CapitalDot x={218} y={1366} />
      <CapitalDot x={485} y={1931} />
      <circle cx="213" cy="1729" r="7" fill="#f0f0f0" stroke="#2b2c30" strokeWidth="3" />
      <g fontFamily={SANS} fontSize="42" fontWeight="700" fill="#1a1b1f" {...halo}>
        {countries.map(([name, x, y]) => (
          <text key={name} x={x} y={y}>
            {name}
          </text>
        ))}
      </g>
      <g fontFamily={SANS} fontSize="35" fill="#303136" {...halo}>
        {cities.map(([name, x, y]) => (
          <text key={name} x={x} y={y}>
            {name}
          </text>
        ))}
        <text x="505" y="1963" fontFamily='"DejaVu Sans", sans-serif'>
          تونس
        </text>
      </g>
      <text x="614" y="2041" fontFamily={SANS} fontSize="33" fill="#147f96">
        Mediterranean Sea
      </text>
      <text x="82" y="2152" fontFamily="Lato, sans-serif" fontSize="52" fontWeight="700" {...halo}>
        <tspan fill="#4285f4">G</tspan>
        <tspan fill="#ea4335">o</tspan>
        <tspan fill="#fbbc05">o</tspan>
        <tspan fill="#4285f4">g</tspan>
        <tspan fill="#34a853">l</tspan>
        <tspan fill="#ea4335">e</tspan>
      </text>
    </svg>
  );
}

function SlidersIcon() {
  return (
    <svg viewBox="96 483 108 130" className="h-[130px] w-[108px]" fill="none" stroke="#22e6ac" strokeWidth="8" strokeLinecap="round" aria-hidden="true">
      <path d="M113 508V539M113 559V588M148 508V530M148 548V588M184 508V548M184 567V588" />
      <path d="M100 557H127M135 531H162M171 566H197" />
    </svg>
  );
}

function MemberIcon() {
  return (
    <svg viewBox="576 483 108 130" className="h-[130px] w-[108px]" fill="#22e6ac" aria-hidden="true">
      <circle cx="613.5" cy="526.5" r="21.5" />
      <path d="M598 553Q602 553 605 555Q613 557 622 555Q626 553 630 553Q633 553 635 554V566Q635 575 640 580L648 586Q651 591 645 591H583Q576 591 576 583V579Q577 555 598 553Z" />
      <path fillRule="evenodd" d="M646 548H659Q663 548 667 551L682 566Q686 570 682 574L667 589Q663 592 659 589L644 577Q640 572 640 566V554Q640 548 646 548ZM651 555a4 4 0 1 0 0.1 0Z" />
    </svg>
  );
}

function HeartIcon() {
  return (
    <svg viewBox="1056 483 108 130" className="h-[130px] w-[108px]" fill="#22e6ac" aria-hidden="true">
      <path d="M1110 597Q1108 597 1105 594L1066 555C1059 548 1056 541 1056 532C1056 514 1070 501 1086 501C1097 501 1105 506 1110 512C1115 506 1123 501 1134 501C1150 501 1164 514 1164 532C1164 541 1161 548 1154 555L1115 594Q1112 597 1110 597Z" />
    </svg>
  );
}

function HomeIcon() {
  return (
    <svg viewBox="87 308 162 163" className="h-[54px] w-[54px]" fill="currentColor" aria-hidden="true">
      <path d="M168 308Q182 308 194 318L234 351Q249 364 249 382V436Q249 471 215 471H200Q184 471 184 455V427Q184 411 168 411Q152 411 152 427V455Q152 471 136 471H121Q87 471 87 436V382Q87 364 102 351L142 318Q154 308 168 308Z" />
    </svg>
  );
}

function HandshakeIcon() {
  return (
    <svg viewBox="714 300 318 180" className="h-[60px] w-[106px]" fill="currentColor" aria-hidden="true">
      <path d="M760 300H857L798 342C812 370 830 384 855 384C880 384 890 372 908 356L934 394C944 410 935 424 922 423Q914 423 908 416C910 432 900 441 891 441Q883 441 878 434C880 450 870 459 862 459Q856 459 851 454C853 470 845 480 834 480Q826 480 820 472L762 395C735 396 714 376 714 347C714 320 735 300 760 300Z" />
      <path d="M891 300H996C1018 302 1032 316 1032 337V370C1032 390 1018 404 997 404Q980 412 966 423H953C958 412 957 398 950 388L909 330L876 358C858 374 836 366 821 347Z" />
    </svg>
  );
}

function TagsIcon() {
  return (
    <svg viewBox="795 2331 64 60" className="h-[60px] w-16" fill="currentColor" aria-hidden="true">
      <path fillRule="evenodd" d="M827 2332H843Q849 2332 849 2338V2354Q849 2359 846 2362L823 2385Q820 2388 817 2385L797 2365Q794 2362 797 2359L821 2335Q824 2332 827 2332ZM837 2341.500a4 4 0 1 0 0.1 0Z" />
      <path d="M853 2337Q858 2338 858 2343V2358Q858 2362 855 2365L834 2388Q831 2391 827 2387L851 2363Q853 2361 853 2357Z" />
    </svg>
  );
}

function PersonIcon() {
  return (
    <svg viewBox="1033 2328 57 64" className="h-16 w-[57px]" fill="currentColor" aria-hidden="true">
      <circle cx="1061.500" cy="2342" r="14" />
      <path d="M1053 2359H1070C1082 2359 1090 2369 1090 2380C1090 2388 1085 2392 1078 2392H1045C1038 2392 1033 2388 1033 2380C1033 2369 1041 2359 1053 2359Z" />
    </svg>
  );
}

function StatusBar() {
  return (
    <div className="flex h-[56px] items-center justify-between pl-[131px] pr-[98px]">
      <div className="flex items-center gap-2">
        <span className="text-[50px] leading-[56px] font-semibold" style={{ fontFamily: "Inter, sans-serif" }}>
          4:30
        </span>
        <svg viewBox="0 0 39 39" className="h-[39px] w-[39px]" aria-hidden="true">
          <path d="M33 1Q40 -2 38 6L24 36Q20 41 19 35V21H4Q-2 20 2 15Z" />
        </svg>
      </div>
      <div className="flex items-center">
        <svg viewBox="0 0 58 37" className="h-[37px] w-[58px]" aria-hidden="true">
          <rect x="0" y="23" width="10" height="14" rx="3" />
          <rect x="16" y="16" width="10" height="21" rx="3" />
          <rect x="32" y="8" width="10" height="29" rx="3" />
          <rect x="48" y="0" width="10" height="37" rx="3" />
        </svg>
        <svg viewBox="0 0 50 37" className="ml-[22px] h-[37px] w-[50px]" aria-hidden="true">
          <path d="M0 10.500Q11 0 25 0Q39 0 50 10.500L45 15.500Q36 8 25 8Q14 8 5 15.500Z" />
          <path d="M9 19.500Q16 13 25 13Q34 13 41 19.500L36 25Q31 20 25 20Q19 20 14 25Z" />
          <path d="M17.500 29Q25 23 32.500 29L25 37Z" />
        </svg>
        <div className="ml-[23px] flex h-[41px] w-[75px] items-center justify-center overflow-hidden rounded-[13px] bg-[linear-gradient(90deg,#000_83%,#a8aaa9_83%)] text-[#eff2f1]">
          <span className="text-[35px] leading-[41px] font-bold" style={{ fontFamily: "Inter, sans-serif" }}>
            82
          </span>
        </div>
        <div className="ml-[3px] h-3 w-1 rounded-r-full bg-[#a8aaa9]" />
      </div>
    </div>
  );
}

function MenuIcon() {
  return (
    <svg viewBox="0 0 75 58" className="h-[58px] w-[75px]" fill="#d0cfd5" aria-hidden="true">
      {[0, 22, 43].map((y) => (
        <g key={y}>
          <circle cx="7" cy={y + 7} r="7" />
          <rect x="18" y={y} width="57" height="14" rx="7" />
        </g>
      ))}
    </svg>
  );
}

const cards = [
  { title: "Dashboard", note: "2 ads", Icon: SlidersIcon, gap: "mt-[84px]" },
  { title: "Membership", note: "Subscribed", Icon: MemberIcon, gap: "mt-[72px]" },
  { title: "Saved", note: "0 list", Icon: HeartIcon, gap: "mt-[72px]" },
];

function NavItem({ label, Icon, active }) {
  return (
    <button
      type="button"
      className={`flex flex-col items-center gap-[18px] pt-5 whitespace-nowrap ${active ? "text-[#013c85]" : "text-[#d0cfd5]"}`}
    >
      <span className="flex h-16 items-center">
        <Icon />
      </span>
      <span className="text-[36px] leading-[44px]">{label}</span>
    </button>
  );
}

export default function App() {
  return (
    <div
      className="flex min-h-screen flex-col overflow-x-hidden bg-white text-black"
      style={{ fontFamily: SANS }}
    >
      <header className="bg-[#f0f0f0]">
        <div className="rounded-b-[48px] bg-[#eff2f1] pt-[60px] pb-[67px]">
          <StatusBar />
          <div className="mt-[139px] grid grid-cols-[1fr_auto_1fr] items-start px-[78px]">
            <button type="button" aria-label="Menu" className="w-[75px]">
              <MenuIcon />
            </button>
            <h1 className="text-[56px] leading-[65px]">Account</h1>
          </div>
        </div>
      </header>

      <main className="pt-9">
        <section className="flex gap-15 overflow-hidden px-12 py-3">
          {cards.map(({ title, note, Icon, gap }) => (
            <a
              key={title}
              href="#"
              className="block h-[435px] w-[420px] shrink-0 rounded-3xl bg-white px-12 pt-12 shadow-[0_0_24px_rgba(0,0,0,0.22)]"
            >
              <Icon />
              <h2 className={`text-[48px] leading-[56px] ${gap}`}>{title}</h2>
              <p className="mt-[54px] text-[42px] leading-[48px] text-[#555555]">{note}</p>
            </a>
          ))}
        </section>

        <div className="px-12">
          <p className="mt-[82px] mb-[13px] text-[36px] leading-[44px] text-[#fb0007]">
            Update your location to see your profile on dealer page
          </p>
          <section className="rounded-3xl bg-white pt-12 pb-[15px] shadow-[0_0_24px_rgba(0,0,0,0.22)]">
            <div className="flex items-end justify-between px-12">
              <h2 className="pb-[17px] text-[48px] leading-[56px]">Address</h2>
              <button type="button" className="h-[120px] w-[300px] rounded-[78px/60px] bg-[#22e6ac] pt-3 text-[45px] leading-[54px]">
                Edit
              </button>
            </div>
            <div className="mt-10 flex gap-6 px-12">
              <svg viewBox="0 0 48 50" className="h-[50px] w-12" aria-hidden="true">
                <path d="M24 48C20 40 7 28 7 18.500C7 9 14.500 2.500 24 2.500S41 9 41 18.500C41 28 28 40 24 48Z" fill="#6be3b0" stroke="#000" strokeWidth="2.500" />
                <circle cx="24" cy="19.500" r="8" fill="#fff" stroke="#000" strokeWidth="3" />
              </svg>
              <p className="mt-4 text-[36px] leading-[44px] text-[#555555]">address</p>
            </div>
            <div className="mx-[15px] mt-14">
              <RegionMap />
            </div>
          </section>
        </div>
      </main>

      <nav className="relative mt-auto">
        <div className="absolute inset-0 flex drop-shadow-[0_0_28px_rgba(0,0,0,0.14)]" aria-hidden="true">
          <div className="flex-1 bg-[#eff2f1]" />
          <svg viewBox="0 0 240 249" className="h-full w-60" fill="#eff2f1" preserveAspectRatio="none">
            <path d="M-1 0C18 0 29 8 30 27A90 90 0 0 0 210 27C211 8 222 0 241 0V249H-1Z" />
          </svg>
          <div className="flex-1 bg-[#eff2f1]" />
        </div>
        <div className="relative grid grid-cols-5 pb-[103px]">
          <NavItem label="Home" Icon={HomeIcon} />
          <NavItem label="Dealers" Icon={HandshakeIcon} />
          <button
            type="button"
            aria-label="Add"
            className="-mt-15 flex h-[150px] w-[150px] items-center justify-center justify-self-center rounded-full bg-[#013c85]"
          >
            <svg viewBox="0 0 48 48" className="h-12 w-12" fill="#6be3b0" aria-hidden="true">
              <rect x="17" y="0" width="14" height="48" rx="6" />
              <rect x="0" y="17" width="48" height="14" rx="6" />
            </svg>
          </button>
          <NavItem label="Price Quotes" Icon={TagsIcon} />
          <NavItem label="Account" Icon={PersonIcon} active />
        </div>
      </nav>
    </div>
  );
}
